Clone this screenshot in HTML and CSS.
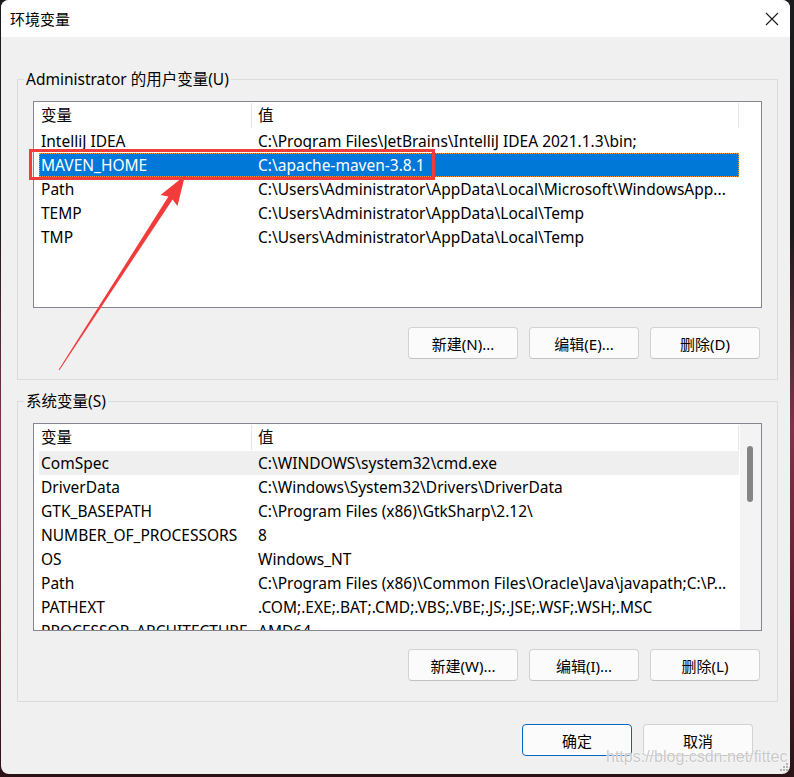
FILE: index.html
```html
<!DOCTYPE html>
<html lang="zh-CN">
<head>
<meta charset="utf-8">
<title>环境变量</title>
<link rel="stylesheet" href="styles.css">
</head>
<body>
<div class="window">
  <div class="titlebar">
    <span class="title">环境变量</span>
    <svg class="close" width="14" height="14" viewBox="0 0 14 14"><path d="M1 1L13 13M13 1L1 13" stroke="#1a1a1a" stroke-width="1.1" fill="none"/></svg>
  </div>
  <div class="content">
    <section class="group g-user">
      <div class="group-label">Administrator 的用户变量(U)</div>
      <div class="list">
        <div class="list-main">
          <div class="hdr"><div class="hc c1">变量</div><div class="hc c2">值</div></div>
          <div class="row"><div class="c1">IntelliJ IDEA</div><div class="c2">C:\Program Files\JetBrains\IntelliJ IDEA 2021.1.3\bin;</div></div>
          <div class="row sel"><div class="c1">MAVEN_HOME</div><div class="c2">C:\apache-maven-3.8.1</div></div>
          <div class="row"><div class="c1">Path</div><div class="c2">C:\Users\Administrator\AppData\Local\Microsoft\WindowsApp...</div></div>
          <div class="row"><div class="c1">TEMP</div><div class="c2">C:\Users\Administrator\AppData\Local\Temp</div></div>
          <div class="row"><div class="c1">TMP</div><div class="c2">C:\Users\Administrator\AppData\Local\Temp</div></div>
        </div>
        <div class="vspace"></div>
      </div>
      <div class="btns">
        <button class="btn">新建(N)...</button>
        <button class="btn">编辑(E)...</button>
        <button class="btn">删除(D)</button>
      </div>
    </section>
    <section class="group g-sys">
      <div class="group-label">系统变量(S)</div>
      <div class="list list-sys">
        <div class="list-main">
          <div class="hdr"><div class="hc c1">变量</div><div class="hc c2">值</div></div>
          <div class="row hover"><div class="c1">ComSpec</div><div class="c2">C:\WINDOWS\system32\cmd.exe</div></div>
          <div class="row"><div class="c1">DriverData</div><div class="c2">C:\Windows\System32\Drivers\DriverData</div></div>
          <div class="row"><div class="c1">GTK_BASEPATH</div><div class="c2">C:\Program Files (x86)\GtkSharp\2.12\</div></div>
          <div class="row"><div class="c1">NUMBER_OF_PROCESSORS</div><div class="c2">8</div></div>
          <div class="row"><div class="c1">OS</div><div class="c2">Windows_NT</div></div>
          <div class="row"><div class="c1">Path</div><div class="c2">C:\Program Files (x86)\Common Files\Oracle\Java\javapath;C:\P...</div></div>
          <div class="row"><div class="c1">PATHEXT</div><div class="c2">.COM;.EXE;.BAT;.CMD;.VBS;.VBE;.JS;.JSE;.WSF;.WSH;.MSC</div></div>
          <div class="row"><div class="c1">PROCESSOR_ARCHITECTURE</div><div class="c2">AMD64</div></div>
        </div>
        <div class="vscroll"><div class="thumb"></div></div>
      </div>
      <div class="btns">
        <button class="btn">新建(W)...</button>
        <button class="btn">编辑(I)...</button>
        <button class="btn">删除(L)</button>
      </div>
    </section>
    <div class="footer">
      <button class="btn primary">确定</button>
      <button class="btn">取消</button>
    </div>
  </div>
</div>
<svg class="annot" width="794" height="777" viewBox="0 0 794 777">
  <rect x="30.5" y="150.5" width="403" height="28" fill="none" stroke="#f23b3b" stroke-width="3"/>
  <polygon points="58.6,369.7 168.4,196.6 160.5,195 185,175.5 177.5,206 172.6,199.4 59.4,370.3" fill="#f23b3b"/>
  <g fill="#b4b4b4">
    <rect x="786" y="763" width="2" height="2"/>
    <rect x="783" y="766" width="2" height="2"/><rect x="786" y="766" width="2" height="2"/>
    <rect x="780" y="769" width="2" height="2"/><rect x="783" y="769" width="2" height="2"/><rect x="786" y="769" width="2" height="2"/>
  </g>
</svg>
<div class="watermark">https://blog.csdn.net/fittec</div>
</body>
</html>
```
FILE: styles.css
```css
html, body {
  margin: 0;
  height: 100%;
}
body {
  position: relative;
  overflow: hidden;
  background: linear-gradient(180deg, #1b1b1d 0%, #1e1a1c 30%, #7c3448 55%, #5a1e2a 80%, #2a1216 100%);
  font-family: "Noto Sans", "Noto Sans CJK SC", sans-serif;
  font-size: 15.5px;
  color: #000;
}
.window {
  margin-left: 1px;
  width: 789px;
  height: 774px;
  background: #f0f0f0;
  border-radius: 8px;
  overflow: hidden;
  display: flex;
  flex-direction: column;
}
.titlebar {
  flex: none;
  height: 37px;
  background: #fff;
  display: flex;
  align-items: center;
  justify-content: space-between;
  padding: 0 11px 0 9px;
}
.title {
  font-family: "Noto Sans CJK SC", sans-serif;
  font-size: 15px;
  line-height: 20px;
}
.close { display: block; }

.group {
  border: 1px solid #dcdcdc;
  margin: 42px 12px 0 16px;
  padding: 0 15px 20px 15px;
}
.g-sys { margin-top: 21px; }
.group-label {
  width: fit-content;
  margin: -11px 0 0 -9px;
  padding: 0 2px;
  background: #f0f0f0;
  line-height: 20px;
  white-space: nowrap;
}
.list {
  margin-top: 12px;
  height: 207px;
  box-sizing: border-box;
  border: 1px solid #848790;
  background: #fff;
  display: flex;
  overflow: hidden;
}
.list-sys { height: 208px; }
.list-main {
  width: 705px;
  flex: none;
  padding-left: 5px;
  box-sizing: border-box;
}
.vspace, .vscroll { flex: 1; }
.vscroll {
  background: #f3f3f3;
  margin-left: 1px;
}
.thumb {
  width: 6px;
  height: 56px;
  margin: 22px 0 0 7px;
  background: #858585;
  border-radius: 3px;
}
.hdr {
  display: flex;
  height: 27px;
}
.hc {
  box-sizing: border-box;
  border-right: 1px solid #e5e5e5;
  margin-top: 1px;
  height: 25px;
  line-height: 25px;
}
.c1 { width: 213px; padding-left: 2px; box-sizing: border-box; }
.c2 { width: 487px; padding-left: 6px; box-sizing: border-box; }
.row .c1, .row .c2 { overflow: hidden; white-space: nowrap; }
.row {
  display: flex;
  width: 700px;
  height: 24px;
  line-height: 24px;
}
.row.sel {
  background: #0078d7;
  color: #fff;
  outline: 1px dotted #f39a3c;
  outline-offset: -1px;
}
.row.hover { background: #efefef; }

.btns {
  display: flex;
  justify-content: flex-end;
  gap: 11px;
  margin-top: 19px;
  padding-right: 2px;
}
.g-sys .btns { margin-top: 18px; }
.btn {
  width: 110px;
  height: 32px;
  padding: 0;
  box-sizing: border-box;
  border: 1px solid #d2d2d2;
  border-bottom-color: #c2c2c2;
  border-radius: 4px;
  background: #fbfbfb;
  font-family: "Noto Sans", "Noto Sans CJK SC", sans-serif;
  font-size: 15px;
  color: #000;
}
.footer {
  display: flex;
  justify-content: flex-end;
  gap: 11px;
  margin-top: 22px;
  padding-right: 37px;
}
.btn.primary {
  border: 1px solid #0067c0;
  box-shadow: inset 0 0 0 1px #ffffff;
}
.annot {
  position: absolute;
  left: 0;
  top: 0;
  pointer-events: none;
}
.watermark {
  position: absolute;
  left: 606px;
  top: 748px;
  font-family: "Liberation Sans", sans-serif;
  font-size: 16px;
  line-height: 18px;
  color: rgba(190, 190, 190, 0.85);
  text-shadow: 0 0 1px #fff, 0 0 2px #fff;
  white-space: nowrap;
}
```
